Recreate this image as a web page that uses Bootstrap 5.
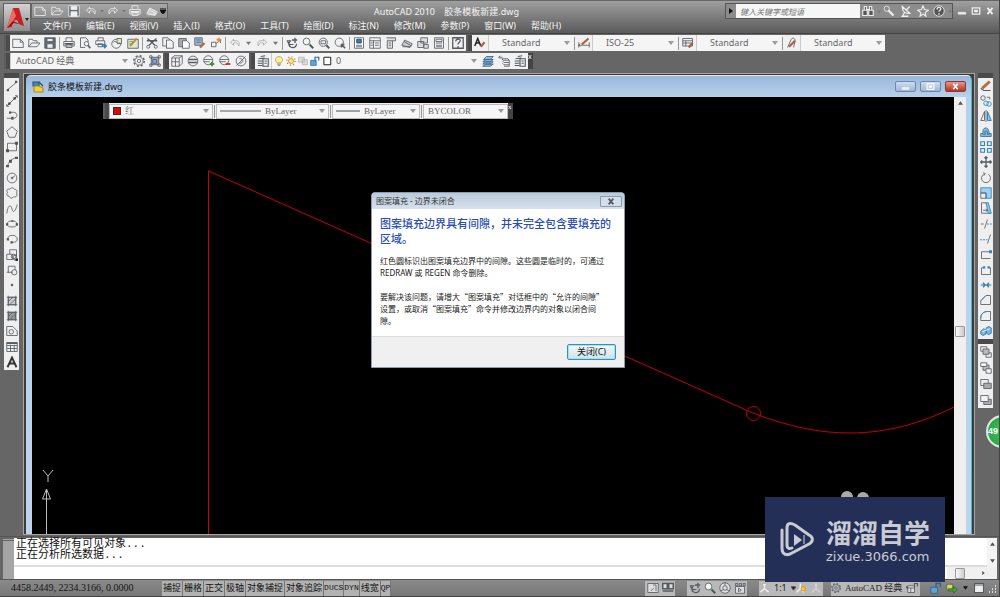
<!DOCTYPE html>
<html lang="zh-CN">
<head>
<meta charset="utf-8">
<meta name="viewport" content="width=device-width, initial-scale=1">
<title>AutoCAD 2010 胶条模板新建.dwg</title>
<link href="https://cdn.jsdelivr.net/npm/bootstrap@5.3.0/dist/css/bootstrap.min.css" rel="stylesheet">
<style>
  body { font: 9px/12px "Noto Sans", "Noto Sans CJK SC", sans-serif; color: #222; background: #666; }
  .app { min-height: 100vh; border-right: 1px solid #444; }
  svg { display: block; flex: none; fill: none; stroke: #565b62; stroke-width: 1.1; }
  .btn { --bs-btn-border-radius: 0; --bs-btn-font-size: 9px; --bs-btn-line-height: 12px; color: inherit; }
  .tool { display: flex; align-items: center; justify-content: center; width: 16px; height: 15px; padding: 0; border: 0; flex: none; }
  .tool svg { width: 12px; height: 12px; }
  .narrow { width: 11px; }
  .narrow svg { width: 5px; }

  .titlebar { height: 34px; padding: 2px 4px 0 3px; background: linear-gradient(#a0a0a0, #8a8a8a 30%, #5a5a5a); border-top: 1px solid #666; border-bottom: 1px solid #444; color: #f4f4f4; }
  .appmenu { width: 28px; height: 29px; background: linear-gradient(#d2d2d2, #8e8e8e); border: 1px solid #606060; }
  .quick { width: 137px; height: 16px; border: 1px solid #666; background: linear-gradient(#a6a6a6, #8f8f8f); }
  .quick svg { stroke: #eee; }
  .find { height: 16px; width: 228px; background: #8c8c8c; border: 1px solid #555; }
  .find input { width: 124px; height: 14px; border: 0; background: #f6f6f6; padding: 0 4px; font-style: italic; font-size: 8px; }
  .find input::placeholder { color: #777; }
  .find svg, .winctl svg { stroke: #eee; }
  .winctl { width: 42px; }
  .menus { gap: 15px; padding-left: 12px; height: 14px; }
  .menus a { color: #f5f5f5; text-decoration: none; white-space: nowrap; }

  .bars { padding: 1px 4px 0; gap: 2px; }
  .bar { height: 16px; background: #f1f1f1; flex: none; }
  .grip { width: 6px; height: 16px; background: #4b4b4b; flex: none; border-left: 2px solid #5c5c5c; }
  .rule { width: 1px; height: 13px; margin: 0 1px; background: #999; flex: none; }
  .drop { border: 0; border-left: 1px solid #ccc; height: 16px; padding: 0 12px 0 13px; border-radius: 0; color: #666; font-size: 9px; line-height: 12px; appearance: none; flex: none;
    background: #f5f5f5 url("data:image/svg+xml,%3Csvg xmlns='http://www.w3.org/2000/svg' width='6' height='4'%3E%3Cpath d='M0 0h6l-3 4z' fill='%23999'/%3E%3C/svg%3E") no-repeat right 3px center; }
  .w-style { width: 85px; }
  .w-space { width: 121px; padding-left: 5px; }
  .layerbox { width: 209px; padding-left: 1px; border-left: 1px solid #ccc; background: #f5f5f5; }
  .layerbox .tool { width: 12px; } .layerbox svg { width: 10px; }
  .layerbox select { padding-left: 3px; border: 0; }
  .closer { width: 5px; height: 16px; background: #444; color: #fff; font-size: 7px; line-height: 8px; flex: none; padding: 0; border: 0; }

  .work { padding: 4px 6px 1px 4px; }
  .strip { width: 15px; background: #efefef; flex: none; border-top: 5px solid #4a4a4a; }
  .strip .tool { width: 15px; }
  .draw { height: 297px; } .modify { height: 266px; } .order { height: 69px; }
  .mdi { margin: 0 3px 0 4px; border: 1px solid #aaa59d; background: #3c3c3c; padding: 1px 2px 0 2px; min-width: 0; }
  .frame { background: linear-gradient(#9bb7db, #b7d0eb 21px, #bed4ec); border-radius: 5px 5px 0 0; border-right: 1px solid #38bcd0; border-top: 1px solid #dfeaf6; padding: 0 5px 0 6px; min-width: 0; }
  .doc { height: 21px; color: #111; }
  .cap { width: 21px; height: 11px; border: 1px solid #7088a8; border-radius: 2px; padding: 0; background: linear-gradient(#cfdef0, #9db6d4); display: flex; align-items: center; justify-content: center; }
  .cap svg { width: 9px; height: 7px; stroke: #fff; }
  .cap.shut { background: linear-gradient(#e0998e, #b93020); border-color: #8a3a30; }
  .canvas { background: #000; min-width: 0; }
  .vscroll { width: 12px; background: #efefef; flex: none; }
  .thumb { width: 10px; height: 11px; border: 1px solid #999; background: linear-gradient(90deg, #fafafa, #ccc); border-radius: 1px; }
  .props { position: absolute; left: 71px; top: 6px; height: 16px; background: #eee; font-family: "Liberation Serif", "Noto Serif CJK SC", "Noto Sans CJK SC", serif; }
  .props .drop { font-family: inherit; padding-left: 4px; border: 0; }
  .field { background: #f5f5f5; height: 15px; border: 1px solid #bbb; }
  .field .drop { height: 13px; }
  .swatch { width: 8px; height: 8px; background: #e60000; border: 1px solid #333; margin-left: 3px; }

  .alertbox { position: absolute; left: 0; right: 3px; top: 192px; margin: auto; width: 254px; background: #fff; border: 1px solid #8d9bab; border-radius: 4px 4px 0 0; font-size: 8px; z-index: 5; }
  .alertbox header { height: 16px; padding: 0 2px 0 4px; background: linear-gradient(#b9cadc, #d6e1ec); border-radius: 3px 3px 0 0; color: #333; }
  .alertbox .msg { padding: 7px 8px 9px; color: #222; }
  .alertbox h1 { font-size: 11px; line-height: 15px; color: #2b4fae; margin: 0 0 9px; }
  .alertbox p { margin: 0 0 12px; }
  .alertbox p:last-child { margin: 0; font-family: "Noto Sans CJK SC", sans-serif; }
  .alertbox footer { height: 31px; background: #f0f0f0; border-top: 1px solid #ddd; padding-right: 8px; }
  .x { width: 22px; height: 11px; padding: 0; border: 1px solid #8b9aad; border-radius: 1px; background: #d3deea; }
  .okay { width: 49px; height: 16px; padding: 0; border: 1px solid #2f94b8; border-radius: 2px; background: linear-gradient(#f3f8fa, #cfe2ea); font-size: 9px; line-height: 12px; color: #111; box-shadow: inset 0 0 0 1px #a8dff0; }

  .command { padding: 1px 2px 0 3px; border-top: 1px solid #555; }
  .side { width: 11px; background: #a5a5a5; border-top: 3px double #666; }
  .history { background: #fff; height: 29px; padding: 1px 0 0 2px; font: 11px/11px "Liberation Mono", "Noto Sans CJK SC", monospace; color: #111; border-bottom: 2px solid #ddd; }
  .prompt { border: 0; height: 12px; padding: 0 2px; background: #fff; font-size: 9px; outline: 0; min-width: 0; }
  .hscroll { width: 50px; height: 12px; background: #f0f0f0; }
  .cmdscroll { width: 10px; background: #f3f3f3; height: 29px; }
  .cmdscroll svg, .hscroll svg, .vscroll > svg { fill: #555; stroke: none; width: 5px; height: 4px; }

  .status { height: 18px; padding: 1px 2px 1px 11px; background: linear-gradient(#8a8a8a, #777); border-top: 1px solid #555; border-bottom: 1px solid #444; }
  .coords { font: 10px/14px "Liberation Serif", serif; width: 151px; color: #161616; }
  .flag { padding: 0 1px; height: 15px; border: 0; border-right: 1px solid #777; background: #b2b2b2; color: #111; white-space: nowrap; --bs-btn-line-height: 14px; }
  .latin { font: 8px/14px "Liberation Mono", monospace; padding: 0; }
  .cluster { background: #b9b9b9; height: 15px; }
  .cluster .tool { width: 15px; }
  .scale { width: 34px; } .space { width: 74px; font-family: "Liberation Serif", "Noto Sans CJK SC", serif; }
  .brand { position: absolute; right: 54px; bottom: 15px; width: 180px; height: 85px; background: #232f57; color: #c9cbd4; z-index: 6; padding-left: 14px; gap: 11px; }
  .brand strong { font: 700 26px/34px "Noto Sans CJK SC", sans-serif; white-space: nowrap; }
  .brand span { font: 13px/15px "DejaVu Sans", sans-serif; }
  .bubble { position: absolute; right: -20px; top: 415px; width: 33px; height: 33px; border-radius: 50%; border: 2px solid #dfe8dc; background: radial-gradient(#41c15b, #209c40); color: #fff; font: 700 9px/29px "Liberation Sans", sans-serif; z-index: 7; }
</style>
</head>
<body>
<svg width="0" height="0" class="position-absolute" aria-hidden="true"><defs>
  <symbol id="new" viewBox="0 0 16 16"><path d="M1 3h10l4 4v7H1zM11 3v4h4"/></symbol>
  <symbol id="open" viewBox="0 0 16 16"><path d="M1 13V3h5l1 2h5v3M1 13l4-5h11l-4 5z"/></symbol>
  <symbol id="save" viewBox="0 0 16 16"><path d="M1 1h14v14H1z" fill="#666c75"/><path d="M4 2h8v4H4zM4 9h8v6H4z" fill="#eee"/></symbol>
  <symbol id="print" viewBox="0 0 16 16"><path d="M4 6V1h8v5M1 6h14v6H1zM4 10h8v4H4z"/><path d="M2 9h12" stroke-width="2"/></symbol>
  <symbol id="preview" viewBox="0 0 16 16"><path d="M8 14H2V1h7l3 3v3"/><circle cx="10" cy="9" r="3"/><path d="m12 11 3 4" stroke-width="2"/></symbol>
  <symbol id="publish" viewBox="0 0 16 16"><path d="M4 5V1h7v4M1 5h12v5H1zM4 9h6v4H4z"/><path d="M9 12h6m-3-3 3 3-3 3" stroke="#2b79bd" stroke-width="2"/></symbol>
  <symbol id="dwf" viewBox="0 0 16 16"><circle cx="7" cy="9" r="6"/><path d="M3 7c4-4 5 5 9 1M8 8V2h6v7z" fill="#dce8ac"/></symbol>
  <symbol id="markup" viewBox="0 0 16 16"><path d="M1 3h14v12H1z" fill="#d9ead1"/><path d="m4 12 9-10" stroke="#d3892c" stroke-width="2.5"/><path d="M3 6h5M3 9h4" stroke="#58a36a"/></symbol>
  <symbol id="cut" viewBox="0 0 16 16"><path d="m2 2 10 9M14 2 4 11M1 5h14" stroke-width="1.7"/><circle cx="3" cy="13" r="2"/><circle cx="13" cy="13" r="2"/></symbol>
  <symbol id="copy" viewBox="0 0 16 16"><path d="M1 1h7l2 2v9H1z"/><path d="M6 4h6l3 3v8H6z" fill="#f3f3f3"/></symbol>
  <symbol id="paste" viewBox="0 0 16 16"><path d="M1 2h10v11H1z" fill="#aaa"/><path d="M6 5h6l3 3v7H6z" fill="#fff"/></symbol>
  <symbol id="match" viewBox="0 0 16 16"><path d="M1 1h10v10H1z" fill="#9cbde0"/><path d="M3 4h6M3 7h6"/><path d="m8 14 6-6" stroke="#b46b35" stroke-width="3"/></symbol>
  <symbol id="block" viewBox="0 0 16 16"><path d="M2 13V7h6v6zM8 9l5-5M9 3h5v5"/><path d="M12 1v6M9 4h6" stroke="#e1932e" stroke-width="1.8"/></symbol>
  <symbol id="undo" viewBox="0 0 16 16"><path d="M6 3 2 7l4 4V8c4-1 6 0 7 4 2-5-1-8-7-7z"/></symbol>
  <symbol id="redo" viewBox="0 0 16 16"><path d="m10 3 4 4-4 4V8c-4-1-6 0-7 4-2-5 1-8 7-7z"/></symbol>
  <symbol id="caret" viewBox="0 0 8 8"><path d="M0 2h8L4 7z" fill="#777" stroke="none"/></symbol>
  <symbol id="pan" viewBox="0 0 16 16"><path d="M12 1v7M8 4h7" stroke-width="1.8"/><path d="M1 5h5l-2 3c0 8 10 8 10 1M2 5l3 8M5 10h5" stroke-width="1.6"/></symbol>
  <symbol id="zoom" viewBox="0 0 16 16"><circle cx="6" cy="6" r="4.500" fill="#eef5f2"/><path d="m10 10 5 5" stroke-width="2.5" stroke="#3e6050"/></symbol>
  <symbol id="zoomwin" viewBox="0 0 16 16"><circle cx="7" cy="7" r="5.500"/><path d="M4 5h6v4H4z"/><path d="m11 11 4 4" stroke-width="2.5"/></symbol>
  <symbol id="zoomprev" viewBox="0 0 16 16"><circle cx="7" cy="7" r="5.500"/><path d="m10 10 5 5M10 14v-4h4" stroke-width="2"/></symbol>
  <symbol id="sheet" viewBox="0 0 16 16"><path d="M2 1h12v14H2z" fill="#fff"/><path d="M5 3h6v5H5z" fill="#3d7ab8" stroke="#245"/><path d="M4 11h8M4 13h8"/></symbol>
  <symbol id="center" viewBox="0 0 16 16"><path d="M1 1h14v14H1zM1 5h14M6 5v10M8 8h5M8 11h5M2 8h3M2 11h3"/></symbol>
  <symbol id="palette" viewBox="0 0 16 16"><path d="M2 1h12v4h-4v10H3V5M3 5h7M5 8h3M5 11h3" fill="#ddd"/></symbol>
  <symbol id="sheets" viewBox="0 0 16 16"><path d="m1 11 4-7 10 5-3 5zM4 6l10 6M2 13h10" fill="#ccc"/></symbol>
  <symbol id="marks" viewBox="0 0 16 16"><path d="M5 1h9v7H5zM1 6h8v8H1zM9 10h6v5H9z" fill="#ddd"/></symbol>
  <symbol id="calc" viewBox="0 0 16 16"><path d="M2 1h12v14H2zM4 3h8v3H4zM4 8h8M4 11h8M4 13h8"/></symbol>
  <symbol id="help" viewBox="0 0 16 16"><path d="M1 1h14v14H1zM5 6c0-4 6-4 6-1 0 2-3 2-3 5M8 12v2" stroke-width="1.7"/></symbol>
  <symbol id="textstyle" viewBox="0 0 16 16"><path d="M1 12 5 2l4 10M3 8h5" stroke-width="2" stroke="#222"/><path d="m9 13 5-6" stroke="#a8643d" stroke-width="3"/></symbol>
  <symbol id="dimstyle" viewBox="0 0 16 16"><path d="M1 7v7M15 7v7M1 11h14M3 9l-2 2 2 2"/><path d="m5 10 9-8" stroke="#a8643d" stroke-width="3"/></symbol>
  <symbol id="tabstyle" viewBox="0 0 16 16"><path d="M1 2h13v10H1zM1 5h13M5 5v7M1 8h13"/><path d="m9 14 5-6" stroke="#a8643d" stroke-width="3"/></symbol>
  <symbol id="leadstyle" viewBox="0 0 16 16"><path d="M2 14 7 3c2-3 6-1 5 3l-2 8"/><path d="m4 13 8-8" stroke="#a8643d" stroke-width="3"/></symbol>
  <symbol id="gear" viewBox="0 0 16 16"><circle cx="8" cy="8" r="5.500"/><circle cx="8" cy="8" r="2.200"/><circle cx="8" cy="8" r="7" stroke-dasharray="2.7 2.8" stroke-width="1.8"/></symbol>
  <symbol id="wsave" viewBox="0 0 16 16"><path d="M3 3h10v10H3zM5 6h5v5H5z" fill="#8faac6"/><path d="M1 1h3v3H1zM12 1h3v3h-3zM1 12h3v3H1zM12 12h3v3h-3z"/></symbol>
  <symbol id="cube" viewBox="0 0 16 16"><path d="M1 4h10v11H1zM4 1h11v10M1 4l3-3M11 4l4-3M1 9h10M6 4v11M11 15l4-4"/></symbol>
  <symbol id="ball" viewBox="0 0 16 16"><circle cx="8" cy="8" r="6.500"/><path d="M2 6h12M2 10h12" stroke-width="1.8"/></symbol>
  <symbol id="balladd" viewBox="0 0 16 16"><circle cx="7" cy="7" r="6"/><path d="M1 6h12M1 9h8"/><path d="M12 9v6M9 12h6" stroke="#2e9a3c" stroke-width="2.4"/></symbol>
  <symbol id="balldel" viewBox="0 0 16 16"><circle cx="7" cy="7" r="6"/><path d="M1 6h12M1 9h8"/><path d="M9 12h6" stroke="#c62828" stroke-width="2.4"/></symbol>
  <symbol id="ballno" viewBox="0 0 16 16"><circle cx="8" cy="8" r="6.500"/><path d="m2 14 12-12M6 5c6-1 6 6 0 6"/></symbol>
  <symbol id="layers" viewBox="0 0 16 16"><path d="m5 2 6-1M2 5l8-1M1 8h6M1 11h6M1 14h6M8 5h7v10H8zM10 8h3M10 11h3" stroke-width="1.5"/></symbol>
  <symbol id="bulb" viewBox="0 0 16 16"><path d="M5 11C0 6 3 1 8 1s8 5 3 10z" fill="#fff19a" stroke="#b08b25"/><path d="M5 13h6M6 15h4"/></symbol>
  <symbol id="sun" viewBox="0 0 16 16"><circle cx="8" cy="8" r="4" fill="#ffe680" stroke="#a8822d"/><circle cx="8" cy="8" r="6.600" stroke="#a8822d" stroke-dasharray="1.5 3.7" stroke-width="2.4"/></symbol>
  <symbol id="vp" viewBox="0 0 16 16"><path d="M1 2h9v8H1zM7 6h8v8H7z" stroke="#aaa" fill="#ddd"/></symbol>
  <symbol id="lock" viewBox="0 0 16 16"><path d="M1 7h9v8H1z" fill="#5ba6d8" stroke="#28648d"/><path d="M8 7V2h6v5" stroke="#28648d" stroke-width="1.8"/></symbol>
  <symbol id="barlock" viewBox="0 0 16 16"><path d="M1 5h9v9H1zM1 8h9M5 8v6" fill="#ddd"/><path d="M10 8V2h4v4" stroke-width="1.6"/></symbol>
  <symbol id="square" viewBox="0 0 16 16"><path d="M3 2h11v12H3z" fill="#fff" stroke="#222" stroke-width="1.6"/></symbol>
  <symbol id="laycur" viewBox="0 0 16 16"><path d="m1 15 4-3h10l-4 3zM1 12l4-3h10l-4 3zM1 9l4-3h10l-4 3zM2 6l4-4h9l-4 4z" fill="#8fbfe8" stroke="#3a5f80"/></symbol>
  <symbol id="layprev" viewBox="0 0 16 16"><path d="M5 5h8l2 2H7zM6 8l2 2h7M6 11l2 2h7M15 7v8H8M1 3h5M1 3l2-2M1 3l2 2"/></symbol>
  <symbol id="line" viewBox="0 0 16 16"><path d="M2 13 14 3"/><path d="M1 12h3v3H1zM12 1h3v3h-3z" fill="#555" stroke="none"/></symbol>
  <symbol id="xline" viewBox="0 0 16 16"><path d="M1 15 15 1"/><path d="M3 10h3v3H3zM10 3h3v3h-3z" fill="#333" stroke="none"/><path d="M12 1h3v3M1 12v3h3"/></symbol>
  <symbol id="pline" viewBox="0 0 16 16"><path d="M5 3h5c6 0 6 8 0 8M1 11h9"/><path d="M7 9h3v4H7zM4 2h3v3H4z" fill="#555" stroke="none"/></symbol>
  <symbol id="poly" viewBox="0 0 16 16"><path d="m8 1 7 6-3 8H4L1 7z"/></symbol>
  <symbol id="rect" viewBox="0 0 16 16"><path d="M2 3h12v10H2z"/><path d="M0 11h4v4H0zM12 1h4v4h-4z" fill="#555" stroke="none"/></symbol>
  <symbol id="arc" viewBox="0 0 16 16"><path d="M2 14C3 8 7 4 14 2"/><path d="M0 12h4v3H0zM4 5h4v4H4zM12 1h4v3h-4z" fill="#555" stroke="none"/></symbol>
  <symbol id="circle" viewBox="0 0 16 16"><circle cx="8" cy="8" r="6.500"/><path d="m8 8 4-3M7 7h2v2H7z"/></symbol>
  <symbol id="cloud" viewBox="0 0 16 16"><path d="M5 3c2-3 5-2 6 0 4 0 4 3 3 5 2 4-1 6-4 5-2 3-5 2-6-1-4 0-3-3-2-5-2-3 0-5 3-4z"/></symbol>
  <symbol id="spline" viewBox="0 0 16 16"><path d="M1 14C3 0 7 3 8 8s4 5 7-6"/></symbol>
  <symbol id="ellipse" viewBox="0 0 16 16"><ellipse cx="8" cy="8" rx="6.500" ry="4"/><path d="M0 7h3v3H0zM13 7h3v3h-3zM7 3h3v2H7z" fill="#555" stroke="none"/></symbol>
  <symbol id="earc" viewBox="0 0 16 16"><path d="M2 8c1-7 13-6 13 0 0 4-4 5-8 4"/><path d="M1 7h3v3H1zM6 11h3v3H6z" fill="#555" stroke="none"/></symbol>
  <symbol id="insert" viewBox="0 0 16 16"><path d="M5 1h9v9M1 7h8v7H1zM5 1v6M9 10l5-3v6l-3 2z"/><circle cx="10" cy="10" r="3"/><path d="M13 13h3v3h-3z" fill="#000"/></symbol>
  <symbol id="make" viewBox="0 0 16 16"><path d="M3 3h9v5M3 3v8h6M1 11h3"/><circle cx="11" cy="11" r="3.500"/></symbol>
  <symbol id="point" viewBox="0 0 16 16"><path d="M7 7h2v2H7z" fill="#555" stroke="#555"/></symbol>
  <symbol id="hatch" viewBox="0 0 16 16"><path d="M3 3h10v10H3z" fill="#ccc"/><path d="M1 3h14M1 13h14M3 1v14M13 1v14M3 9l6-6M5 13l8-8"/></symbol>
  <symbol id="grad" viewBox="0 0 16 16"><path d="M3 3h10v10H3z" fill="#999"/><path d="M1 3h14M1 13h14M3 1v14M13 1v14M3 9l6-6M5 13l8-8"/></symbol>
  <symbol id="region" viewBox="0 0 16 16"><path d="M1 2h8l6 6v6H1z"/><circle cx="7" cy="9" r="3"/></symbol>
  <symbol id="table" viewBox="0 0 16 16"><path d="M1 2h14v12H1zM1 6h14M1 10h14M6 5v9M11 5v9"/><path d="M1 3h14" stroke-width="2"/></symbol>
  <symbol id="mtext" viewBox="0 0 16 16"><path d="M2 15 8 2l6 13M4 10h8" stroke-width="2.5" stroke="#333"/></symbol>
  <symbol id="erase" viewBox="0 0 16 16"><path d="m3 11 10-9" stroke="#b06f43" stroke-width="4"/><path d="m1 11 4 3h9" stroke-width="1.6"/></symbol>
  <symbol id="copyobj" viewBox="0 0 16 16"><circle cx="4" cy="4" r="3"/><path d="M9 3h4v3"/><g stroke="#2b84bd"><circle cx="8" cy="11" r="3"/><circle cx="12" cy="12" r="3"/></g></symbol>
  <symbol id="mirror" viewBox="0 0 16 16"><path d="M6 2v12H1zM8 0v16"/><path d="M10 2v12h5z" fill="#89c1e8" stroke="#2875aa"/></symbol>
  <symbol id="offset" viewBox="0 0 16 16"><path d="M1 10h3c-2-10 9-10 8 0h3v4H1z" fill="#79bae6" stroke="#2875aa"/><path d="M4 11h3c-2-6 4-6 3 0h3"/></symbol>
  <symbol id="array" viewBox="0 0 16 16"><path d="M1 1h5v5H1zM10 1h5v5h-5zM1 10h5v5H1zM10 10h5v5h-5z" stroke="#2e86be" stroke-width="1.5"/></symbol>
  <symbol id="move" viewBox="0 0 16 16"><path d="M8 1v14M1 8h14M6 3l2-2 2 2M6 13l2 2 2-2M3 6 1 8l2 2M13 6l2 2-2 2" stroke-width="1.7"/></symbol>
  <symbol id="rotate" viewBox="0 0 16 16"><path d="M5 3a6 6 0 1 0 6 0M4 1l3 1-2 3"/></symbol>
  <symbol id="scaleobj" viewBox="0 0 16 16"><path d="M1 1h14v14H8V8H1z" fill="#9ed0f0" stroke="#2e86be"/><path d="M1 8h7v7H1z"/></symbol>
  <symbol id="stretch" viewBox="0 0 16 16"><path d="M2 1h6l6 14H2z"/><path d="M8 1h3l4 14h-4z" fill="#8bc6ed" stroke="#2e86be"/><path d="M4 11h6m-2-2 2 2-2 2"/></symbol>
  <symbol id="trim" viewBox="0 0 16 16"><path d="M1 8h4M10 2 6 14" /><path d="M9 8h7" stroke="#2e86be" stroke-dasharray="3 1"/></symbol>
  <symbol id="extend" viewBox="0 0 16 16"><path d="M14 2 10 14"/><path d="M0 9h10" stroke="#2e86be" stroke-dasharray="3 1"/></symbol>
  <symbol id="breakat" viewBox="0 0 16 16"><path d="M13 5H2v9h12"/><path d="M12 3h4v4h-4z" fill="#2e86be" stroke="none"/></symbol>
  <symbol id="break" viewBox="0 0 16 16"><path d="M5 5H2v9h12V5h-3"/><path d="M4 3h3v3H4zM10 3h3v3h-3z" fill="#2e86be" stroke="none"/></symbol>
  <symbol id="join" viewBox="0 0 16 16"><path d="M1 8h14M4 5l3 3-3 3M12 5 9 8l3 3" stroke="#2878ac" stroke-width="1.5"/></symbol>
  <symbol id="chamfer" viewBox="0 0 16 16"><path d="M1 14V9l7-7h6v12z"/><path d="m1 9 7-7" stroke="#2e86be"/></symbol>
  <symbol id="fillet" viewBox="0 0 16 16"><path d="M1 14V11c0-6 4-9 9-9h4v12z"/><path d="M1 11c0-6 4-9 9-9" stroke="#2e86be"/></symbol>
  <symbol id="explode" viewBox="0 0 16 16"><path d="m1 8 4-3 3 2v5l-4 2-3-2zM8 4l4-2 3 2v7l-4 2-2-2z" fill="#78b8e3" stroke="#2878ac"/><path d="m3 9 10-4" stroke="#fff"/></symbol>
  <symbol id="front" viewBox="0 0 16 16"><path d="M1 1h8v6H1zM8 9h7v6H8z"/><path d="M4 4h8v7H4z" fill="#bbb"/></symbol>
  <symbol id="back" viewBox="0 0 16 16"><path d="M4 4h8v7H4z" fill="#bbb"/><path d="M1 1h8v5H1zM8 9h7v6H8z" fill="#f3f3f3"/></symbol>
  <symbol id="above" viewBox="0 0 16 16"><path d="M1 2h10v8H1z"/><path d="M5 7h10v7H5z" fill="#aaa"/></symbol>
  <symbol id="under" viewBox="0 0 16 16"><path d="M5 7h10v7H5z" fill="#aaa"/><path d="M1 2h10v8H1z" fill="#f3f3f3"/></symbol>
  <symbol id="bino" viewBox="0 0 16 16"><path d="M3 2h3v5H3zM10 2h3v5h-3zM1 7h6v7H1zM9 7h6v7H9zM6 6h4" fill="#555" stroke-width="1.5"/></symbol>
  <symbol id="key" viewBox="0 0 16 16"><circle cx="5" cy="5" r="3.500"/><path d="m7 7 7 7" stroke-width="3"/></symbol>
  <symbol id="dish" viewBox="0 0 16 16"><path d="M3 2c0 7 4 10 10 9zM8 7l5-5M6 10l-3 5h8" stroke-width="1.7"/></symbol>
  <symbol id="star" viewBox="0 0 16 16"><path d="m8 1 2 5 5 1-4 3 1 5-4-3-4 3 1-5-4-3 5-1z" stroke-width="1.5"/></symbol>
  <symbol id="ask" viewBox="0 0 16 16"><circle cx="8" cy="8" r="7" fill="#555"/><path d="M5.500 6c0-4 5-3 5-1 0 2-2.500 2-2.500 4M8 11v2" stroke-width="1.8"/></symbol>
  <symbol id="min" viewBox="0 0 16 12"><path d="M2 8h12v3H2z" fill="#eee"/></symbol>
  <symbol id="max" viewBox="0 0 16 12"><path d="M2 1h12v10H2zM6 5h4v2H6z" stroke-width="2"/></symbol>
  <symbol id="cross" viewBox="0 0 16 12"><path d="m4 1 8 10M12 1 4 11" stroke-width="3"/></symbol>
  <symbol id="man" viewBox="0 0 16 16"><path d="M8 2v7M8 9l-6 5M8 9l6 5M6 3h4" stroke-width="2" stroke="#eee"/></symbol>
  <symbol id="manlit" viewBox="0 0 16 16"><path d="M7 2v7M7 9l-5 5M7 9l5 5" stroke-width="2" stroke="#eee"/><circle cx="11" cy="9" r="3" fill="#ffc52e" stroke="#d88b1c"/></symbol>
  <symbol id="model" viewBox="0 0 16 16"><path d="M1 2h14v12H1z" fill="#ddd"/><path d="M8 4h4v8M5 12l4-4"/></symbol>
  <symbol id="layout" viewBox="0 0 16 16"><path d="M1 2h6v7H1zM9 2h6v7H9zM1 12h14" stroke-width="2" fill="#ddd"/></symbol>
  <symbol id="wheel" viewBox="0 0 16 16"><circle cx="8" cy="8" r="7" fill="#ddd"/><circle cx="8" cy="8" r="3"/><path d="M8 1v4M2 12l4-2M14 12l-4-2"/></symbol>
  <symbol id="motion" viewBox="0 0 16 16"><path d="M2 6h12v9H2z" fill="#ddd"/><path d="M2 2h3v3H2zM7 2h3v3H7zM12 2h3v3h-3zM6 8l4 3-4 2z"/></symbol>
  <symbol id="tray" viewBox="0 0 16 16"><path d="M1 3h8v8H1z" fill="#e1d75b"/><path d="M3 9h7V6l5 4-5 5v-3H3z" fill="#49a442" stroke="#2b702b"/></symbol>
  <symbol id="up" viewBox="0 0 6 4"><path d="M0 4h6L3 0z"/></symbol>
  <symbol id="down" viewBox="0 0 6 4"><path d="M0 0h6L3 4z"/></symbol>
</defs></svg>

<div class="app d-flex flex-column position-relative overflow-hidden">
  <header class="titlebar d-flex">
    <button class="btn appmenu p-0 d-flex align-items-center" aria-label="应用程序菜单">
      <svg width="26" height="26" viewBox="0 0 26 26" stroke="none"><path d="M3 23 9 3h6l5 18-5-2-2-4-4 1-1 6z" fill="#c91f24" stroke="none"/><path d="m9 3 3 8-3 5-6 7z" fill="#ef6a62" stroke="none"/><path d="m3 23 6-7 11 5-5-2-5-1z" fill="#8a1015" stroke="none"/><path d="M21 13h4l-2 3z" fill="#222" stroke="none"/></svg>
    </button>
    <div class="flex-fill d-flex flex-column">
      <div class="d-flex align-items-start">
        <div class="quick d-flex align-items-center justify-content-around">
          <button class="btn tool" aria-label="新建"><svg><use href="#new"/></svg></button>
          <button class="btn tool" aria-label="打开"><svg><use href="#open"/></svg></button>
          <button class="btn tool" aria-label="保存"><svg><use href="#save"/></svg></button>
          <button class="btn tool" aria-label="放弃"><svg><use href="#undo"/></svg></button>
          <svg width="4" height="6"><use href="#caret"/></svg>
          <button class="btn tool" aria-label="重做"><svg><use href="#redo"/></svg></button>
          <svg width="4" height="6"><use href="#caret"/></svg>
          <button class="btn tool" aria-label="打印"><svg><use href="#print"/></svg></button>
          <button class="btn tool" aria-label="图纸集"><svg><use href="#sheets"/></svg></button>
          <svg width="6" height="6" viewBox="0 0 6 6"><path d="M0 0h6M0 2h6L3 6z" fill="#111" stroke="#111"/></svg>
        </div>
        <div class="flex-fill text-center pt-1 lh-1">AutoCAD 2010 &nbsp; &nbsp;胶条模板新建.dwg</div>
        <div class="find d-flex align-items-center">
          <svg width="10" height="8" viewBox="0 0 10 8"><path d="m3 1 4 3-4 3z" fill="#111" stroke="none"/></svg>
          <input type="text" placeholder="键入关键字或短语" aria-label="搜索">
          <div class="d-flex flex-fill align-items-center justify-content-around">
            <button class="btn tool" aria-label="搜索"><svg><use href="#bino"/></svg></button>
            <svg width="4" height="5"><use href="#caret"/></svg>
            <button class="btn tool" aria-label="速博应用"><svg><use href="#key"/></svg></button>
            <button class="btn tool" aria-label="通讯中心"><svg><use href="#dish"/></svg></button>
            <button class="btn tool" aria-label="收藏夹"><svg><use href="#star"/></svg></button>
            <button class="btn tool" aria-label="帮助"><svg><use href="#ask"/></svg></button>
            <svg width="4" height="5"><use href="#caret"/></svg>
          </div>
        </div>
        <div class="winctl d-flex justify-content-end pt-1">
          <button class="btn p-0 border-0 me-1" aria-label="最小化"><svg width="10" height="8"><use href="#min"/></svg></button>
          <button class="btn p-0 border-0 me-1" aria-label="最大化"><svg width="10" height="8"><use href="#max"/></svg></button>
          <button class="btn p-0 border-0" aria-label="关闭"><svg width="10" height="8"><use href="#cross"/></svg></button>
        </div>
      </div>
      <nav class="menus d-flex align-items-center">
        <a href="#">文件(F)</a><a href="#">编辑(E)</a><a href="#">视图(V)</a><a href="#">插入(I)</a><a href="#">格式(O)</a><a href="#">工具(T)</a><a href="#">绘图(D)</a><a href="#">标注(N)</a><a href="#">修改(M)</a><a href="#">参数(P)</a><a href="#">窗口(W)</a><a href="#">帮助(H)</a>
      </nav>
    </div>
  </header>

  <div class="bars d-flex flex-column">
    <div class="d-flex">
      <span class="grip"></span>
      <div class="bar d-flex align-items-center">
        <button class="btn tool" aria-label="新建"><svg><use href="#new"/></svg></button>
        <button class="btn tool" aria-label="打开"><svg><use href="#open"/></svg></button>
        <button class="btn tool" aria-label="保存"><svg><use href="#save"/></svg></button>
        <span class="rule"></span>
        <button class="btn tool" aria-label="打印"><svg><use href="#print"/></svg></button>
        <button class="btn tool" aria-label="打印预览"><svg><use href="#preview"/></svg></button>
        <button class="btn tool" aria-label="发布"><svg><use href="#publish"/></svg></button>
        <button class="btn tool" aria-label="三维 DWF"><svg><use href="#dwf"/></svg></button>
        <button class="btn tool" aria-label="标记"><svg><use href="#markup"/></svg></button>
        <span class="rule"></span>
        <button class="btn tool" aria-label="剪切"><svg><use href="#cut"/></svg></button>
        <button class="btn tool" aria-label="复制"><svg><use href="#copy"/></svg></button>
        <button class="btn tool" aria-label="粘贴"><svg><use href="#paste"/></svg></button>
        <button class="btn tool" aria-label="特性匹配"><svg><use href="#match"/></svg></button>
        <button class="btn tool" aria-label="块编辑器"><svg><use href="#block"/></svg></button>
        <span class="rule"></span>
        <button class="btn tool opacity-50" aria-label="放弃"><svg><use href="#undo"/></svg></button>
        <button class="btn tool narrow" aria-label="放弃列表"><svg><use href="#caret"/></svg></button>
        <button class="btn tool opacity-50" aria-label="重做"><svg><use href="#redo"/></svg></button>
        <button class="btn tool narrow" aria-label="重做列表"><svg><use href="#caret"/></svg></button>
        <span class="rule"></span>
        <button class="btn tool" aria-label="平移"><svg><use href="#pan"/></svg></button>
        <button class="btn tool" aria-label="实时缩放"><svg><use href="#zoom"/></svg></button>
        <button class="btn tool" aria-label="窗口缩放"><svg><use href="#zoomwin"/></svg></button>
        <button class="btn tool" aria-label="缩放上一个"><svg><use href="#zoomprev"/></svg></button>
        <span class="rule"></span>
        <button class="btn tool" aria-label="特性"><svg><use href="#sheet"/></svg></button>
        <button class="btn tool" aria-label="设计中心"><svg><use href="#center"/></svg></button>
        <button class="btn tool" aria-label="工具选项板"><svg><use href="#palette"/></svg></button>
        <button class="btn tool" aria-label="图纸集"><svg><use href="#sheets"/></svg></button>
        <button class="btn tool" aria-label="标记集"><svg><use href="#marks"/></svg></button>
        <button class="btn tool" aria-label="计算器"><svg><use href="#calc"/></svg></button>
        <span class="rule"></span>
        <button class="btn tool" aria-label="帮助"><svg><use href="#help"/></svg></button>
      </div>
      <span class="grip"></span>
      <div class="bar d-flex align-items-center">
        <button class="btn tool" aria-label="文字样式管理"><svg><use href="#textstyle"/></svg></button>
        <select class="drop w-style" aria-label="文字样式"><option>Standard</option></select>
        <span class="rule"></span>
        <button class="btn tool" aria-label="标注样式管理"><svg><use href="#dimstyle"/></svg></button>
        <select class="drop w-style" aria-label="标注样式"><option>ISO-25</option></select>
        <span class="rule"></span>
        <button class="btn tool" aria-label="表格样式管理"><svg><use href="#tabstyle"/></svg></button>
        <select class="drop w-style" aria-label="表格样式"><option>Standard</option></select>
        <span class="rule"></span>
        <button class="btn tool" aria-label="引线样式管理"><svg><use href="#leadstyle"/></svg></button>
        <select class="drop w-style" aria-label="引线样式"><option>Standard</option></select>
      </div>
    </div>
    <div class="d-flex">
      <span class="grip"></span>
      <div class="bar d-flex align-items-center">
        <select class="drop w-space" aria-label="工作空间"><option>AutoCAD 经典</option></select>
        <button class="btn tool" aria-label="工作空间设置"><svg><use href="#gear"/></svg></button>
        <button class="btn tool" aria-label="我的工作空间"><svg><use href="#wsave"/></svg></button>
      </div>
      <span class="grip"></span>
      <div class="bar d-flex align-items-center">
        <button class="btn tool" aria-label="三维视图"><svg><use href="#cube"/></svg></button>
        <button class="btn tool" aria-label="隔离对象"><svg><use href="#ball"/></svg></button>
        <button class="btn tool" aria-label="添加对象"><svg><use href="#balladd"/></svg></button>
        <button class="btn tool" aria-label="移除对象"><svg><use href="#balldel"/></svg></button>
        <button class="btn tool" aria-label="结束隔离"><svg><use href="#ballno"/></svg></button>
      </div>
      <span class="grip"></span>
      <div class="bar d-flex align-items-center">
        <button class="btn tool" aria-label="图层特性"><svg><use href="#layers"/></svg></button>
        <div class="layerbox d-flex align-items-center">
          <button class="btn tool" aria-label="开关图层"><svg><use href="#bulb"/></svg></button>
          <button class="btn tool" aria-label="冻结图层"><svg><use href="#sun"/></svg></button>
          <button class="btn tool" aria-label="视口冻结"><svg><use href="#vp"/></svg></button>
          <button class="btn tool" aria-label="锁定图层"><svg><use href="#lock"/></svg></button>
          <button class="btn tool" aria-label="图层颜色"><svg><use href="#square"/></svg></button>
          <select class="drop flex-fill" aria-label="图层"><option>0</option></select>
        </div>
        <button class="btn tool" aria-label="置为当前"><svg><use href="#laycur"/></svg></button>
        <button class="btn tool" aria-label="上一个图层"><svg><use href="#layprev"/></svg></button>
        <button class="btn tool" aria-label="图层状态"><svg><use href="#layers"/></svg></button>
      </div>
      <button class="closer d-flex" aria-label="关闭工具栏">x</button>
    </div>
  </div>

  <main class="work d-flex flex-fill">
    <div class="strip draw d-flex flex-column justify-content-around">
      <button class="btn tool" aria-label="直线"><svg><use href="#line"/></svg></button>
      <button class="btn tool" aria-label="构造线"><svg><use href="#xline"/></svg></button>
      <button class="btn tool" aria-label="多段线"><svg><use href="#pline"/></svg></button>
      <button class="btn tool" aria-label="正多边形"><svg><use href="#poly"/></svg></button>
      <button class="btn tool" aria-label="矩形"><svg><use href="#rect"/></svg></button>
      <button class="btn tool" aria-label="圆弧"><svg><use href="#arc"/></svg></button>
      <button class="btn tool" aria-label="圆"><svg><use href="#circle"/></svg></button>
      <button class="btn tool" aria-label="修订云线"><svg><use href="#cloud"/></svg></button>
      <button class="btn tool" aria-label="样条曲线"><svg><use href="#spline"/></svg></button>
      <button class="btn tool" aria-label="椭圆"><svg><use href="#ellipse"/></svg></button>
      <button class="btn tool" aria-label="椭圆弧"><svg><use href="#earc"/></svg></button>
      <button class="btn tool" aria-label="插入块"><svg><use href="#insert"/></svg></button>
      <button class="btn tool" aria-label="创建块"><svg><use href="#make"/></svg></button>
      <button class="btn tool" aria-label="点"><svg><use href="#point"/></svg></button>
      <button class="btn tool" aria-label="图案填充"><svg><use href="#hatch"/></svg></button>
      <button class="btn tool" aria-label="渐变色"><svg><use href="#grad"/></svg></button>
      <button class="btn tool" aria-label="面域"><svg><use href="#region"/></svg></button>
      <button class="btn tool" aria-label="表格"><svg><use href="#table"/></svg></button>
      <button class="btn tool" aria-label="多行文字"><svg><use href="#mtext"/></svg></button>
    </div>

    <div class="mdi flex-fill d-flex">
      <section class="frame flex-fill d-flex flex-column">
        <div class="doc d-flex align-items-center">
          <svg width="12" height="12" viewBox="0 0 12 12"><path d="M1 1h6v4H1z" fill="#3f8dc0" stroke="#257"/><path d="M2 5h5l4 2v4H2z" fill="#f2cf35" stroke="#b08a20"/><path d="m7 1 4 4" stroke="#444"/></svg>
          <span class="ms-1 flex-fill">胶条模板新建.dwg</span>
          <div class="d-flex gap-1">
            <button class="cap" aria-label="最小化图形"><svg><use href="#min"/></svg></button>
            <button class="cap" aria-label="最大化图形"><svg><use href="#max"/></svg></button>
            <button class="cap shut" aria-label="关闭图形"><svg><use href="#cross"/></svg></button>
          </div>
        </div>
        <div class="flex-fill d-flex">
          <div class="canvas flex-fill position-relative overflow-hidden">
            <svg class="position-absolute top-0 start-0" width="100%" height="100%" aria-label="图形">
              <g stroke="#c80000" stroke-width="1">
                <path d="M176.500 440V74L721 316C757 330 788 336 818 336c35 0 70-9 104-26"/>
                <circle cx="721.500" cy="316.500" r="7"/>
              </g>
              <path d="m11 373 5 6 5-6M16 379v6M14.500 437V392l-4 10h8l-4-10" stroke="#bbb" stroke-width="1"/>
              <circle cx="815" cy="400" r="6" fill="#aaa" stroke="none"/><circle cx="831" cy="401" r="6" fill="#aaa" stroke="none"/>
            </svg>
            <div class="props d-flex align-items-center">
              <span class="grip"></span>
              <div class="field d-flex align-items-center"><span class="swatch"></span><select class="drop" style="width:91px" aria-label="颜色"><option>红</option></select></div>
              <span class="rule"></span>
              <div class="field d-flex align-items-center"><svg width="44" height="3"><path d="M3 1h41"/></svg><select class="drop" style="width:67px" aria-label="线型"><option>ByLayer</option></select></div>
              <span class="rule"></span>
              <div class="field d-flex align-items-center"><svg width="27" height="3"><path d="M3 1h24"/></svg><select class="drop" style="width:59px" aria-label="线宽"><option>ByLayer</option></select></div>
              <span class="rule"></span>
              <div class="field d-flex align-items-center"><select class="drop" style="width:83px" aria-label="打印样式"><option>BYCOLOR</option></select></div>
              <button class="closer d-flex" aria-label="关闭特性">x</button>
            </div>
          </div>
          <div class="vscroll d-flex flex-column align-items-center pt-1">
            <svg><use href="#up"/></svg>
            <div class="flex-fill d-flex flex-column justify-content-center"><div class="thumb mt-4"></div></div>
          </div>
        </div>
      </section>
    </div>

    <div class="d-flex flex-column">
      <div class="strip modify d-flex flex-column justify-content-around">
        <button class="btn tool" aria-label="删除"><svg><use href="#erase"/></svg></button>
        <button class="btn tool" aria-label="复制对象"><svg><use href="#copyobj"/></svg></button>
        <button class="btn tool" aria-label="镜像"><svg><use href="#mirror"/></svg></button>
        <button class="btn tool" aria-label="偏移"><svg><use href="#offset"/></svg></button>
        <button class="btn tool" aria-label="阵列"><svg><use href="#array"/></svg></button>
        <button class="btn tool" aria-label="移动"><svg><use href="#move"/></svg></button>
        <button class="btn tool" aria-label="旋转"><svg><use href="#rotate"/></svg></button>
        <button class="btn tool" aria-label="缩放"><svg><use href="#scaleobj"/></svg></button>
        <button class="btn tool" aria-label="拉伸"><svg><use href="#stretch"/></svg></button>
        <button class="btn tool" aria-label="修剪"><svg><use href="#trim"/></svg></button>
        <button class="btn tool" aria-label="延伸"><svg><use href="#extend"/></svg></button>
        <button class="btn tool" aria-label="打断于点"><svg><use href="#breakat"/></svg></button>
        <button class="btn tool" aria-label="打断"><svg><use href="#break"/></svg></button>
        <button class="btn tool" aria-label="合并"><svg><use href="#join"/></svg></button>
        <button class="btn tool" aria-label="倒角"><svg><use href="#chamfer"/></svg></button>
        <button class="btn tool" aria-label="圆角"><svg><use href="#fillet"/></svg></button>
        <button class="btn tool" aria-label="分解"><svg><use href="#explode"/></svg></button>
      </div>
      <div class="strip order d-flex flex-column justify-content-around">
        <button class="btn tool" aria-label="前置"><svg><use href="#front"/></svg></button>
        <button class="btn tool" aria-label="后置"><svg><use href="#back"/></svg></button>
        <button class="btn tool" aria-label="置于对象之上"><svg><use href="#above"/></svg></button>
        <button class="btn tool" aria-label="置于对象之下"><svg><use href="#under"/></svg></button>
      </div>
    </div>
  </main>

  <section class="command d-flex">
    <div class="side"></div>
    <div class="flex-fill">
      <div class="d-flex">
        <div class="history flex-fill"><div>正在选择所有可见对象...</div><div>正在分析所选数据...</div></div>
        <div class="cmdscroll d-flex flex-column justify-content-between align-items-center py-1"><svg><use href="#up"/></svg><svg><use href="#down"/></svg></div>
      </div>
      <div class="d-flex">
        <input class="prompt flex-fill" type="text" aria-label="命令行">
        <div class="hscroll d-flex align-items-center"><span class="thumb ms-2 me-3"></span><svg viewBox="0 0 4 6"><path d="m0 0 4 3-4 3z"/></svg></div>
      </div>
    </div>
  </section>

  <footer class="status d-flex align-items-center">
    <div class="coords">4458.2449, 2234.3166, 0.0000</div>
    <button class="btn flag">捕捉</button><button class="btn flag">栅格</button><button class="btn flag">正交</button><button class="btn flag">极轴</button><button class="btn flag">对象捕捉</button><button class="btn flag">对象追踪</button><button class="btn flag latin">DUCS</button><button class="btn flag latin">DYN</button><button class="btn flag">线宽</button><button class="btn flag latin">QP</button>
    <div class="ms-auto d-flex gap-2">
      <div class="cluster d-flex me-1">
        <button class="btn tool" aria-label="模型"><svg><use href="#model"/></svg></button>
        <button class="btn tool" aria-label="布局"><svg><use href="#layout"/></svg></button>
      </div>
      <div class="cluster d-flex me-1">
        <button class="btn tool" aria-label="平移视图"><svg><use href="#pan"/></svg></button>
        <button class="btn tool" aria-label="缩放视图"><svg><use href="#zoom"/></svg></button>
        <button class="btn tool" aria-label="控制盘"><svg><use href="#wheel"/></svg></button>
        <button class="btn tool" aria-label="运动显示"><svg><use href="#motion"/></svg></button>
      </div>
      <div class="cluster d-flex">
        <button class="btn p-0 border-0 scale d-flex align-items-center gap-1"><svg width="11" height="12"><use href="#man"/></svg>1:1<svg width="5" height="5" viewBox="0 0 6 4"><path d="M0 0h6L3 4z" fill="#111"/></svg></button>
        <button class="btn tool" aria-label="注释可见性"><svg><use href="#manlit"/></svg></button>
        <button class="btn tool opacity-50" aria-label="自动缩放"><svg><use href="#man"/></svg></button>
      </div>
      <div class="cluster d-flex">
        <button class="btn p-0 border-0 space d-flex align-items-center gap-1 text-nowrap"><svg width="10" height="12"><use href="#gear"/></svg>AutoCAD 经典<svg width="5" height="5" viewBox="0 0 6 4"><path d="M0 0h6L3 4z" fill="#111"/></svg></button>
        <button class="btn tool" aria-label="锁定工具栏"><svg><use href="#barlock"/></svg></button>
      </div>
      <div class="d-flex align-items-center">
        <button class="btn tool" aria-label="性能"><svg><use href="#lock"/></svg></button>
        <button class="btn tool" aria-label="状态托盘"><svg><use href="#tray"/></svg></button>
        <button class="btn tool narrow" aria-label="状态栏菜单"><svg viewBox="0 0 6 4"><path d="M0 0h6L3 4z" fill="#111" stroke="none"/></svg></button>
        <button class="btn tool" aria-label="全屏显示"><svg viewBox="0 0 16 16"><path d="M2 2h12v12H2zM2 4h12" fill="#eee" stroke-width="1.5"/></svg></button>
        <svg width="10" height="12" viewBox="0 0 10 12"><path d="M2 10h1M5 10h1M8 10h1M5 7h1M8 7h1M8 4h1" stroke="#ddd" stroke-width="2"/></svg>
      </div>
    </div>
  </footer>

  <div class="alertbox" role="dialog" aria-labelledby="alert-title">
    <header class="d-flex align-items-center justify-content-between">
      <span id="alert-title">图案填充 - 边界未闭合</span>
      <button class="x d-flex align-items-center justify-content-center" aria-label="关闭对话框"><svg width="10" height="7"><use href="#cross"/></svg></button>
    </header>
    <div class="msg">
      <h1>图案填充边界具有间隙，并未完全包含要填充的区域。</h1>
      <p>红色圆标识出图案填充边界中的间隙。这些圆是临时的，可通过<br>REDRAW 或 REGEN 命令删除。</p>
      <p>要解决该问题，请增大“图案填充”对话框中的“允许的间隙”<br>设置，或取消“图案填充”命令并修改边界内的对象以闭合间<br>隙。</p>
    </div>
    <footer class="d-flex align-items-center justify-content-end"><button class="okay">关闭(C)</button></footer>
  </div>

  <div class="brand d-flex align-items-center">
    <svg width="36" height="38" viewBox="0 0 36 38"><path d="M3 9v18c0 7 5 8 10 5l17-9c5-3 4-7 0-9L16 4C10 1 8 3 8 7v17c0 4 3 4 5 3" stroke="#c9cbd4" stroke-width="3" stroke-linecap="round"/><path d="m15 13 8 6-8 6z" fill="#c9cbd4" stroke="none"/><path d="M25 14v9" stroke="#c9cbd4"/></svg>
    <div class="d-flex flex-column"><strong>溜溜自学</strong><span>zixue.3066.com</span></div>
  </div>
  <div class="bubble">49</div>
</div>
<script src="https://cdn.jsdelivr.net/npm/bootstrap@5.3.0/dist/js/bootstrap.bundle.min.js"></script>
</body>
</html>
